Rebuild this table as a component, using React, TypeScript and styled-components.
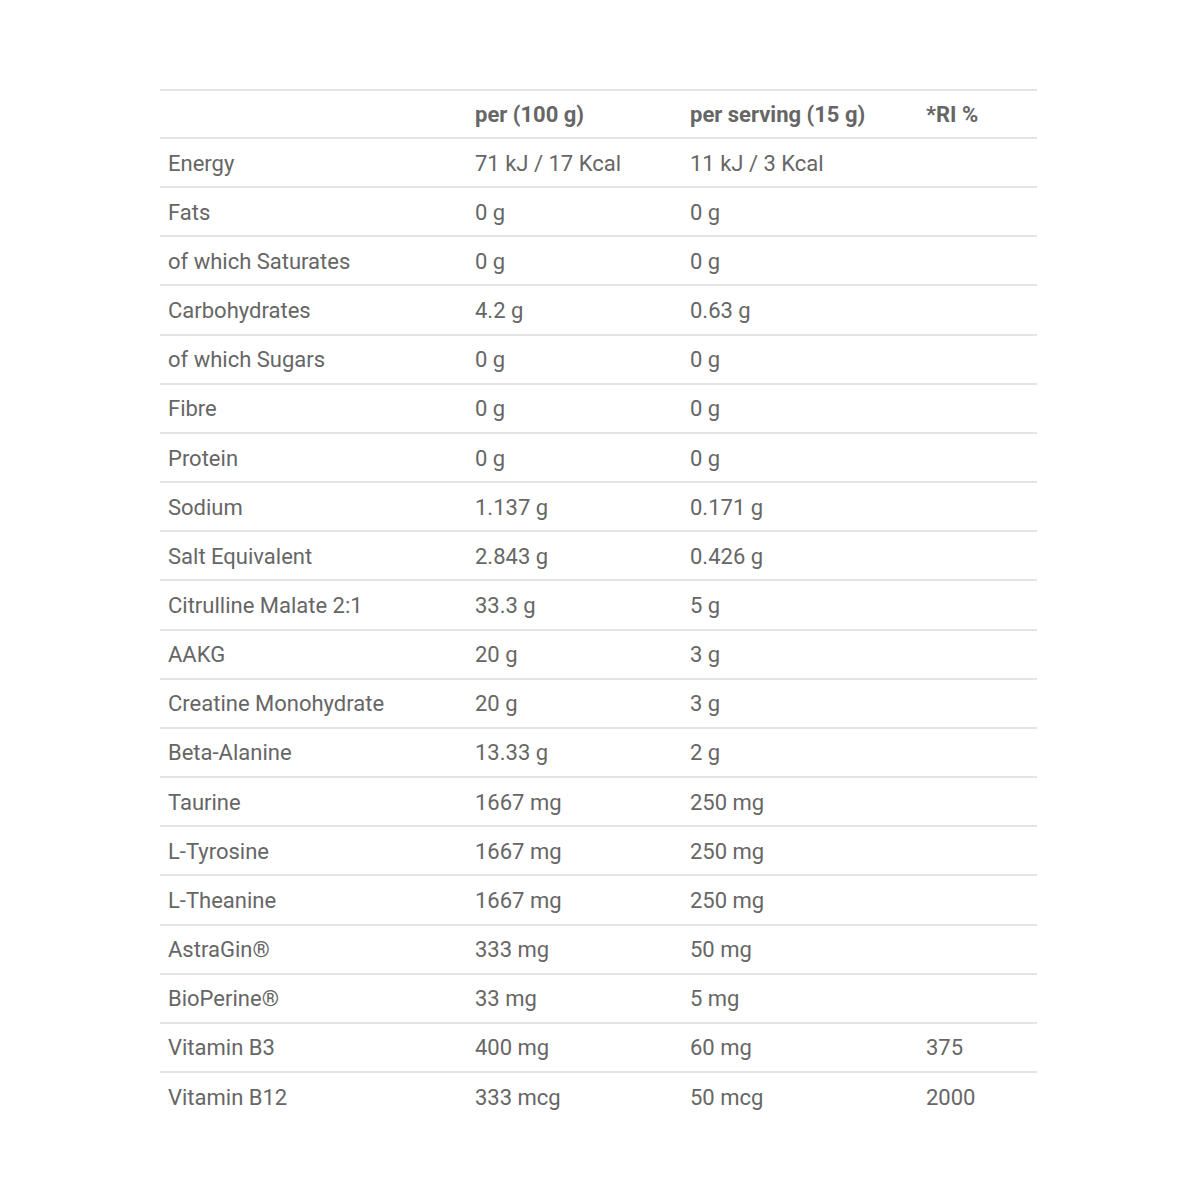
import React from 'react';
import styled, { createGlobalStyle } from 'styled-components';

const GlobalStyle = createGlobalStyle`
  body {
    margin: 0;
    background: #ffffff;
    font-family: Roboto, "Liberation Sans", sans-serif;
  }
`;

interface NutrientRow {
  name: string;
  per100: string;
  perServing: string;
  ri?: string;
}

const rows: NutrientRow[] = [
  { name: 'Energy', per100: '71 kJ / 17 Kcal', perServing: '11 kJ / 3 Kcal' },
  { name: 'Fats', per100: '0 g', perServing: '0 g' },
  { name: 'of which Saturates', per100: '0 g', perServing: '0 g' },
  { name: 'Carbohydrates', per100: '4.2 g', perServing: '0.63 g' },
  { name: 'of which Sugars', per100: '0 g', perServing: '0 g' },
  { name: 'Fibre', per100: '0 g', perServing: '0 g' },
  { name: 'Protein', per100: '0 g', perServing: '0 g' },
  { name: 'Sodium', per100: '1.137 g', perServing: '0.171 g' },
  { name: 'Salt Equivalent', per100: '2.843 g', perServing: '0.426 g' },
  { name: 'Citrulline Malate 2:1', per100: '33.3 g', perServing: '5 g' },
  { name: 'AAKG', per100: '20 g', perServing: '3 g' },
  { name: 'Creatine Monohydrate', per100: '20 g', perServing: '3 g' },
  { name: 'Beta-Alanine', per100: '13.33 g', perServing: '2 g' },
  { name: 'Taurine', per100: '1667 mg', perServing: '250 mg' },
  { name: 'L-Tyrosine', per100: '1667 mg', perServing: '250 mg' },
  { name: 'L-Theanine', per100: '1667 mg', perServing: '250 mg' },
  { name: 'AstraGin®', per100: '333 mg', perServing: '50 mg' },
  { name: 'BioPerine®', per100: '33 mg', perServing: '5 mg' },
  { name: 'Vitamin B3', per100: '400 mg', perServing: '60 mg', ri: '375' },
  { name: 'Vitamin B12', per100: '333 mcg', perServing: '50 mcg', ri: '2000' },
];

const App: React.FC = () => {
  return (
    <>
      <GlobalStyle />
      <Page>
        <Table>
          <colgroup>
            <col style={{ width: 307 }} />
            <col style={{ width: 215 }} />
            <col style={{ width: 236 }} />
            <col style={{ width: 119 }} />
          </colgroup>
          <thead>
            <Row $height={48}>
              <HeadCell />
              <HeadCell>per (100 g)</HeadCell>
              <HeadCell>per serving (15 g)</HeadCell>
              <HeadCell>*RI %</HeadCell>
            </Row>
          </thead>
          <tbody>
            {rows.map((r) => (
              <Row key={r.name} $height={49.16}>
                <Cell>{r.name}</Cell>
                <Cell>{r.per100}</Cell>
                <Cell>{r.perServing}</Cell>
                <Cell>{r.ri ?? ''}</Cell>
              </Row>
            ))}
          </tbody>
        </Table>
      </Page>
    </>
  );
};

const Page = styled.div`
  padding: 89px 0 0 160px;
`;

const Table = styled.table`
  width: 877px;
  border-collapse: collapse;
  table-layout: fixed;
  color: #666666;
  font-size: 22px;
`;

const Row = styled.tr<{ $height: number }>`
  height: ${(p) => p.$height}px;
  border-top: 2px solid #e4e4e4;
`;

const HeadCell = styled.th`
  padding: 1px 8px 0;
  text-align: left;
  font-weight: 700;
  vertical-align: middle;
`;

const Cell = styled.td`
  padding: 1px 8px 0;
  text-align: left;
  vertical-align: middle;
  white-space: nowrap;
`;

export default App;
